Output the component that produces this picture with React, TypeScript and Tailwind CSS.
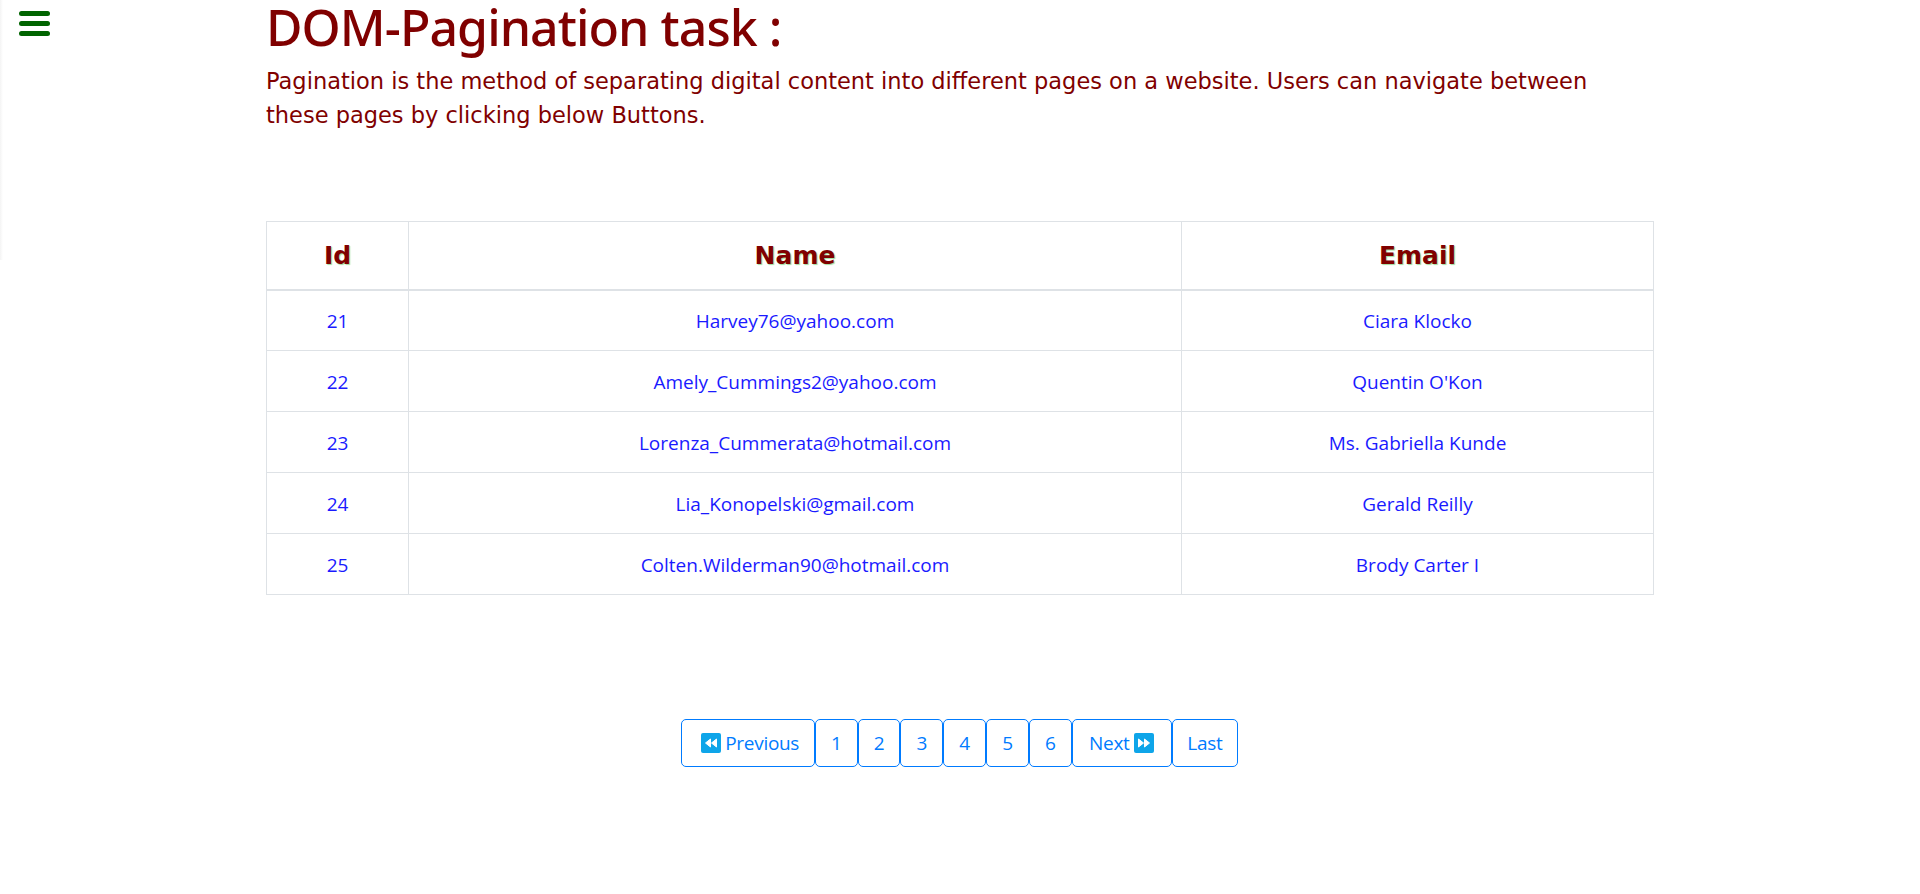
import React from "react";

const rows = [
  { id: 21, name: "Harvey76@yahoo.com", email: "Ciara Klocko" },
  { id: 22, name: "Amely_Cummings2@yahoo.com", email: "Quentin O'Kon" },
  { id: 23, name: "Lorenza_Cummerata@hotmail.com", email: "Ms. Gabriella Kunde" },
  { id: 24, name: "Lia_Konopelski@gmail.com", email: "Gerald Reilly" },
  { id: 25, name: "Colten.Wilderman90@hotmail.com", email: "Brody Carter I" },
];

const thClass =
  "border border-[#dee2e6] border-b-2 p-3 h-[68px] text-center align-middle font-['DejaVu_Sans'] text-[25px] font-bold text-[#800000] [text-shadow:1px_1px_1px_#9fdf9f]";
const tdClass =
  "border border-[#dee2e6] px-3 pt-[13px] pb-[11px] h-[61px] text-center align-middle text-[19px] text-[#1a1aff]";
const btnClass =
  "h-[48px] rounded-[5px] border border-[#007bff] bg-white text-[19px] tracking-[-0.3px] text-[#007bff]";

function Rewind({ flip }: { flip?: boolean }) {
  return (
    <svg width="20" height="20" viewBox="0 0 20 20" className="inline-block align-[-3px]">
      <rect width="20" height="20" rx="2" fill="#0ea5e9" />
      <g fill="#fff" stroke="#fff" strokeWidth="1" strokeLinejoin="round" transform={flip ? "translate(20,0) scale(-1,1)" : undefined}>
        <path d="M9.5 6v8L4.5 10z" />
        <path d="M15.5 6v8l-5-4z" />
      </g>
    </svg>
  );
}

export default function App() {
  return (
    <div className="relative min-h-[894px] bg-white font-['Open_Sans','Noto_Sans',sans-serif]">
      <div className="absolute left-0 top-0 h-[260px] w-[3px] bg-gradient-to-r from-[#f4f4f4] to-white" />
      <button className="absolute left-[19px] top-[11px] flex w-[31px] flex-col gap-[5px]">
        <span className="h-[5px] rounded-full bg-[#006400]" />
        <span className="h-[5px] rounded-full bg-[#006400]" />
        <span className="h-[5px] rounded-full bg-[#006400]" />
      </button>

      <div className="ml-[266px] w-[1388px]">
        <h1 className="font-['Noto_Sans'] text-[50px] leading-[54px] font-medium tracking-[-0.95px] text-[#800000]">
          DOM-Pagination task :
        </h1>
        <p className="mt-[10px] w-[1340px] font-['DejaVu_Sans'] text-[22.5px] leading-[34px] text-[#800000]">
          Pagination is the method of separating digital content into different pages on a website. Users can navigate
          between these pages by clicking below Buttons.
        </p>

        <table className="mt-[89px] w-full table-fixed border-collapse">
          <colgroup>
            <col className="w-[142px]" />
            <col className="w-[773px]" />
            <col />
          </colgroup>
          <thead>
            <tr>
              <th className={thClass}>Id</th>
              <th className={thClass}>Name</th>
              <th className={thClass}>Email</th>
            </tr>
          </thead>
          <tbody>
            {rows.map((r) => (
              <tr key={r.id}>
                <td className={tdClass}>{r.id}</td>
                <td className={tdClass}>{r.name}</td>
                <td className={tdClass}>{r.email}</td>
              </tr>
            ))}
          </tbody>
        </table>
      </div>

      <div className="mt-[124px] flex justify-center pr-[1px]">
        <button className={`${btnClass} w-[134px] pl-[4px]`}>
          <Rewind /> Previous
        </button>
        {[1, 2, 3, 4, 5, 6].map((n) => (
          <button key={n} className={`${btnClass} w-[42.8px]`}>
            {n}
          </button>
        ))}
        <button className={`${btnClass} w-[100px]`}>
          Next <Rewind flip />
        </button>
        <button className={`${btnClass} w-[66.5px]`}>Last</button>
      </div>
    </div>
  );
}
